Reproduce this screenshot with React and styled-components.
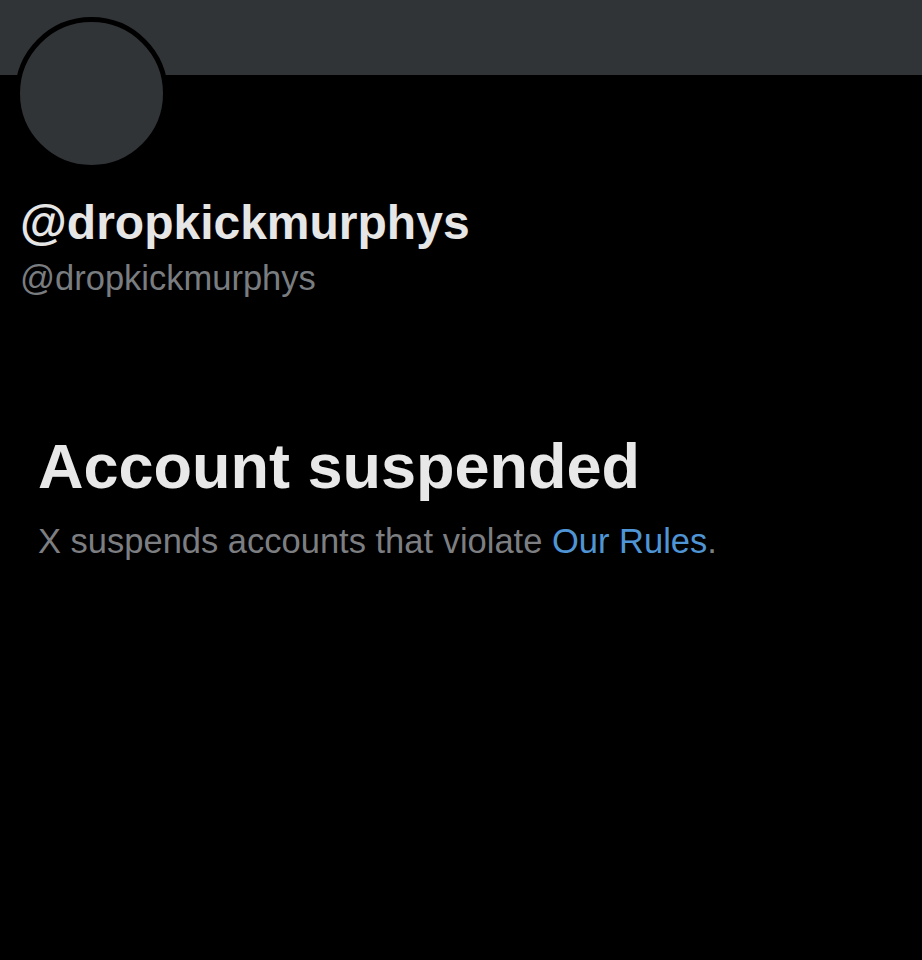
import React from "react";
import styled, { createGlobalStyle } from "styled-components";

const Global = createGlobalStyle`
  html, body { margin: 0; padding: 0; background: #000; }
  body { font-family: "Liberation Sans", Arial, sans-serif; }
`;

const Page = styled.div`
  width: 922px;
  height: 960px;
  background: #000;
  overflow: hidden;
  display: flex;
  flex-direction: column;
`;

const Banner = styled.div`
  height: 75px;
  background: #313437;
  flex-shrink: 0;
`;

const Header = styled.div`
  display: flex;
  flex-direction: column;
  padding-left: 20px;
`;

const Avatar = styled.div`
  width: 143px;
  height: 143px;
  border-radius: 50%;
  background: #313437;
  border: 5px solid #000;
  margin-top: -58px;
  margin-left: -5px;
`;

const Name = styled.div`
  margin-top: 29px;
  font-size: 48px;
  line-height: 1;
  font-weight: 700;
  color: #e6e6e6;
`;

const Handle = styled.div`
  margin-top: 14px;
  font-size: 34.5px;
  line-height: 1;
  color: #7a7d80;
`;

const Notice = styled.div`
  display: flex;
  flex-direction: column;
  padding-left: 38px;
  margin-top: 139px;
`;

const Title = styled.h1`
  margin: 0;
  font-size: 63px;
  line-height: 1;
  font-weight: 700;
  color: #e8e8e8;
`;

const Body = styled.p`
  margin: 26px 0 0;
  font-size: 34.5px;
  line-height: 1;
  color: #7c7e81;
`;

const RulesLink = styled.a`
  color: #4f95d6;
  text-decoration: none;
`;

export default function App() {
  return (
    <Page>
      <Global />
      <Banner />
      <Header>
        <Avatar />
        <Name>@dropkickmurphys</Name>
        <Handle>@dropkickmurphys</Handle>
      </Header>
      <Notice>
        <Title>Account suspended</Title>
        <Body>
          X suspends accounts that violate <RulesLink href="#">Our Rules</RulesLink>.
        </Body>
      </Notice>
    </Page>
  );
}
